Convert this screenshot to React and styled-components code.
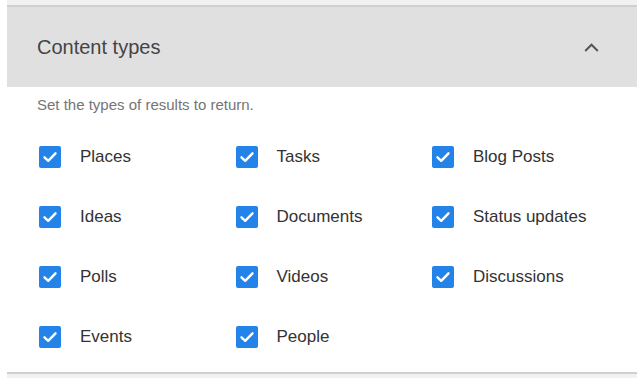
import React from "react";
import styled, { createGlobalStyle } from "styled-components";

const Global = createGlobalStyle`
  html, body { margin: 0; padding: 0; background: #fff; }
  body { font-family: "Liberation Sans", Arial, sans-serif; overflow: hidden; }
`;

const Page = styled.div`
  padding-left: 7px;
  width: 630px;
`;

const PrevSection = styled.div`
  height: 5px;
  background: #f1f1f1;
  border-bottom: 2px solid #cfcfcf;
`;

const Header = styled.div`
  height: 80px;
  background: #e0e0e0;
  display: flex;
  align-items: center;
  justify-content: space-between;
  padding: 0 38px 0 30px;
`;

const Title = styled.h2`
  margin: 0;
  font-size: 20px;
  font-weight: 400;
  color: #444;
`;

const Body = styled.div`
  box-sizing: border-box;
  padding: 9px 0 0 30px;
  height: 285px;
`;

const Desc = styled.p`
  margin: 0;
  font-size: 15px;
  line-height: 18px;
  color: #757575;
`;

const Grid = styled.div`
  display: grid;
  grid-template-columns: repeat(3, 196.5px);
  grid-auto-rows: 22px;
  row-gap: 38px;
  margin-top: 32px;
  padding-left: 2px;
`;

const Item = styled.label`
  display: flex;
  align-items: center;
  gap: 19px;
  font-size: 17px;
  color: #333;
  line-height: 22px;
`;

const Box = styled.span`
  width: 22px;
  height: 22px;
  border-radius: 2px;
  background: #2383e8;
  display: flex;
  align-items: center;
  justify-content: center;
  flex: none;
`;

const Footer = styled.div`
  height: 4px;
  border-top: 2px solid #cfcfcf;
  background: #f1f1f1;
`;

const items = [
  "Places", "Tasks", "Blog Posts",
  "Ideas", "Documents", "Status updates",
  "Polls", "Videos", "Discussions",
  "Events", "People",
];

const Check = () => (
  <svg width="16" height="16" viewBox="0 0 16 16">
    <path d="M2.5 8.3 L6.2 11.8 L13.5 4.3" fill="none" stroke="#fff" strokeWidth="2.4" strokeLinecap="round" strokeLinejoin="round" />
  </svg>
);

export default function App() {
  return (
    <Page>
      <Global />
      <PrevSection />
      <Header>
        <Title>Content types</Title>
        <svg width="15" height="9" viewBox="0 0 15 9">
          <path d="M1.2 8 L7.5 1.7 L13.8 8" fill="none" stroke="#555" strokeWidth="2" />
        </svg>
      </Header>
      <Body>
        <Desc>Set the types of results to return.</Desc>
        <Grid>
          {items.map((t) => (
            <Item key={t}>
              <Box><Check /></Box>
              {t}
            </Item>
          ))}
        </Grid>
      </Body>
      <Footer />
    </Page>
  );
}
